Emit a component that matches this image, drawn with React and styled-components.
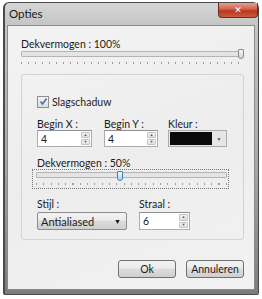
import React from 'react';
import styled, { createGlobalStyle } from 'styled-components';

const GlobalStyle = createGlobalStyle`
  html, body {
    margin: 0;
    padding: 0;
    background: #ffffff;
  }
  body {
    font-family: 'Lato', 'Open Sans', sans-serif;
    font-size: 10.5px;
    color: #1c1c1c;
  }
`;

const Page = styled.div`
  width: 262px;
  height: 299px;
  padding: 2px 3px 0 3px;
  box-sizing: border-box;
`;

const Window = styled.div`
  width: 256px;
  height: 293px;
  box-sizing: border-box;
  border: 1px solid #4a4a4a;
  border-left-width: 2px;
  border-radius: 6px 6px 2px 2px;
  background: linear-gradient(to bottom, #d6d6d6 0%, #c4c4c4 8%, #a8a8a8 55%, #7c7c7c 100%);
  display: flex;
  flex-direction: column;
`;

const TitleBar = styled.div`
  height: 22px;
  display: flex;
  align-items: flex-start;
  justify-content: space-between;
  padding-left: 4px;
`;

const Title = styled.span`
  margin-top: 4px;
  font-size: 11.5px;
  color: #1a1a1a;
`;

const CloseButton = styled.div`
  width: 38px;
  height: 14px;
  border: 1px solid #6b2b24;
  border-top: none;
  border-radius: 0 0 4px 4px;
  background: linear-gradient(to bottom, #e5a090 0%, #d0604c 45%, #b8351f 55%, #c95a3c 100%);
  display: flex;
  align-items: center;
  justify-content: center;
  color: #ffffff;
  font-family: 'DejaVu Sans', sans-serif;
  font-weight: bold;
  font-size: 9px;
`;

const Client = styled.div`
  flex: 1;
  margin: 0 3px 4px 2px;
  border: 1px solid #8c8c8c;
  background: linear-gradient(160deg, #f3f3f3 0%, #ededed 50%, #f2f2f2 100%);
  padding: 12px 10px 0 13px;
  display: flex;
  flex-direction: column;
`;

const Label = styled.div`
  height: 13px;
  line-height: 13px;
  white-space: nowrap;
`;

const SliderBox = styled.div`
  position: relative;
  width: ${(p) => p.$width || 'auto'};
  box-sizing: border-box;
  margin: ${(p) => p.$margin || '0'};
  padding: ${(p) => (p.$focus ? '2px 1px 3px 3px' : '0')};
  border: ${(p) => (p.$focus ? '1px dotted #777777' : 'none')};
`;

const Track = styled.div`
  height: 4px;
  border: 1px solid #b4b4b4;
  background: #e4e4e4;
  border-radius: 1px;
`;

const Ticks = styled.div`
  height: 2px;
  margin-top: 5px;
  background: repeating-linear-gradient(
    to right,
    #9a9a9a 0,
    #9a9a9a 1px,
    transparent 1px,
    transparent ${(p) => p.$step}px
  );
`;

const Thumb = styled.div`
  position: absolute;
  top: ${(p) => (p.$focus ? 1 : -2)}px;
  left: ${(p) => p.$left};
  width: 4px;
  height: 8px;
  border: 1px solid ${(p) => (p.$active ? '#3c7fb1' : '#8a8a8a')};
  border-radius: 1px 1px 3px 3px;
  background: ${(p) =>
    p.$active
      ? 'linear-gradient(to bottom, #eaf6fd, #a9dbf6)'
      : 'linear-gradient(to bottom, #f6f6f6, #d4d4d4)'};
`;

const Slider = ({ value, step, focus, active, margin, width }) => (
  <SliderBox $focus={focus} $margin={margin} $width={width}>
    <Track />
    <Ticks $step={step} />
    <Thumb
      $focus={focus}
      $active={active}
      $left={focus ? `calc(3px + ${value} * (100% - 10px))` : `calc(${value} * (100% - 6px))`}
    />
  </SliderBox>
);

const Group = styled.div`
  margin-top: 10px;
  height: 166px;
  box-sizing: border-box;
  border: 1px solid #d3d3d3;
  border-radius: 3px;
  padding: 20px 0 0 15px;
  display: flex;
  flex-direction: column;
`;

const CheckRow = styled.label`
  display: flex;
  align-items: center;
  gap: 3px;
  height: 13px;
`;

const CheckBox = styled.span`
  width: 10px;
  height: 10px;
  border: 1px solid #8e8f8f;
  background: linear-gradient(to bottom, #f4f4f4, #dcdcdc);
  display: flex;
  align-items: center;
  justify-content: center;
`;

const Row = styled.div`
  display: flex;
  margin-top: ${(p) => p.$top}px;
`;

const Field = styled.div`
  width: ${(p) => p.$width}px;
  margin-right: ${(p) => p.$gap || 0}px;
  display: flex;
  flex-direction: column;
`;

const FieldLabel = styled.div`
  height: 11px;
  line-height: 11px;
  margin-bottom: ${(p) => p.$space || 0}px;
  white-space: nowrap;
`;

const SpinBox = styled.div`
  height: ${(p) => p.$height}px;
  box-sizing: border-box;
  border: 1px solid #abadb3;
  border-top-color: #8e9097;
  background: #ffffff;
  display: flex;
  align-items: center;
  padding-left: 3px;
`;

const SpinValue = styled.span`
  flex: 1;
`;

const SpinButtons = styled.div`
  width: 9px;
  align-self: stretch;
  display: flex;
  flex-direction: column;
  gap: 1px;
  padding: 1px 1px 1px 0;
`;

const SpinButton = styled.div`
  flex: 1;
  border: 1px solid #c3c3c3;
  border-radius: 1px;
  background: linear-gradient(to bottom, #f4f4f4, #e0e0e0);
  display: flex;
  align-items: center;
  justify-content: center;
  font-size: 4px;
  line-height: 1;
  color: #5a5a5a;
`;

const Spin = ({ value, height }) => (
  <SpinBox $height={height}>
    <SpinValue>{value}</SpinValue>
    <SpinButtons>
      <SpinButton>▲</SpinButton>
      <SpinButton>▼</SpinButton>
    </SpinButtons>
  </SpinBox>
);

const ColorPicker = styled.div`
  height: 17px;
  box-sizing: border-box;
  border: 1px solid #acacac;
  background: #e6e6e6;
  display: flex;
  padding: 1px;
  gap: 1px;
`;

const Swatch = styled.div`
  flex: 1;
  background: #0a0a0a;
`;

const ColorArrow = styled.div`
  width: 12px;
  display: flex;
  align-items: center;
  justify-content: center;
  font-size: 5px;
  color: #555555;
`;

const Combo = styled.div`
  height: 18px;
  box-sizing: border-box;
  border: 1px solid #8d8d8d;
  border-radius: 2px;
  background: linear-gradient(to bottom, #f2f2f2 0%, #ebebeb 45%, #dcdcdc 50%, #cfcfcf 100%);
  display: flex;
  align-items: center;
  padding: 0 5px 0 3px;
  font-size: 11px;
`;

const ComboText = styled.span`
  flex: 1;
`;

const ComboArrow = styled.span`
  font-size: 7px;
  color: #111111;
`;

const ButtonRow = styled.div`
  display: flex;
  justify-content: flex-end;
  gap: 10px;
  margin-top: 20px;
`;

const Button = styled.button`
  width: 58px;
  height: 18px;
  padding: 0;
  border: 1px solid #707070;
  border-radius: 3px;
  background: linear-gradient(to bottom, #f2f2f2 0%, #ebebeb 45%, #dddddd 50%, #cfcfcf 100%);
  font-family: inherit;
  font-size: 10.5px;
  color: #1c1c1c;
`;

const Check = () => (
  <svg width="9" height="9" viewBox="0 0 9 9">
    <path d="M1.5 4.5 L3.5 7 L7.5 1.5" fill="none" stroke="#4a6fa8" strokeWidth="1.6" />
  </svg>
);

const App = () => (
  <Page>
    <GlobalStyle />
    <Window>
      <TitleBar>
        <Title>Opties</Title>
        <CloseButton>✕</CloseButton>
      </TitleBar>
      <Client>
        <Label>Dekvermogen : 100%</Label>
        <Slider value={1} step={7} />
        <Group>
          <CheckRow>
            <CheckBox>
              <Check />
            </CheckBox>
            Slagschaduw
          </CheckRow>
          <Row $top={11}>
            <Field $width={55} $gap={12}>
              <FieldLabel>Begin X :</FieldLabel>
              <Spin value="4" height={17} />
            </Field>
            <Field $width={54} $gap={10}>
              <FieldLabel>Begin Y :</FieldLabel>
              <Spin value="4" height={17} />
            </Field>
            <Field $width={59}>
              <FieldLabel>Kleur :</FieldLabel>
              <ColorPicker>
                <Swatch />
                <ColorArrow>▼</ColorArrow>
              </ColorPicker>
            </Field>
          </Row>
          <Row $top={11}>
            <FieldLabel>Dekvermogen : 50%</FieldLabel>
          </Row>
          <Slider value={0.44} step={7.3} focus active width="197px" margin="0 0 0 -5px" />
          <Row $top={10}>
            <Field $width={90} $gap={12}>
              <FieldLabel $space={2}>Stijl :</FieldLabel>
              <Combo>
                <ComboText>Antialiased</ComboText>
                <ComboArrow>▼</ComboArrow>
              </Combo>
            </Field>
            <Field $width={51}>
              <FieldLabel $space={2}>Straal :</FieldLabel>
              <Spin value="6" height={18} />
            </Field>
          </Row>
        </Group>
        <ButtonRow>
          <Button>Ok</Button>
          <Button>Annuleren</Button>
        </ButtonRow>
      </Client>
    </Window>
  </Page>
);

export default App;
